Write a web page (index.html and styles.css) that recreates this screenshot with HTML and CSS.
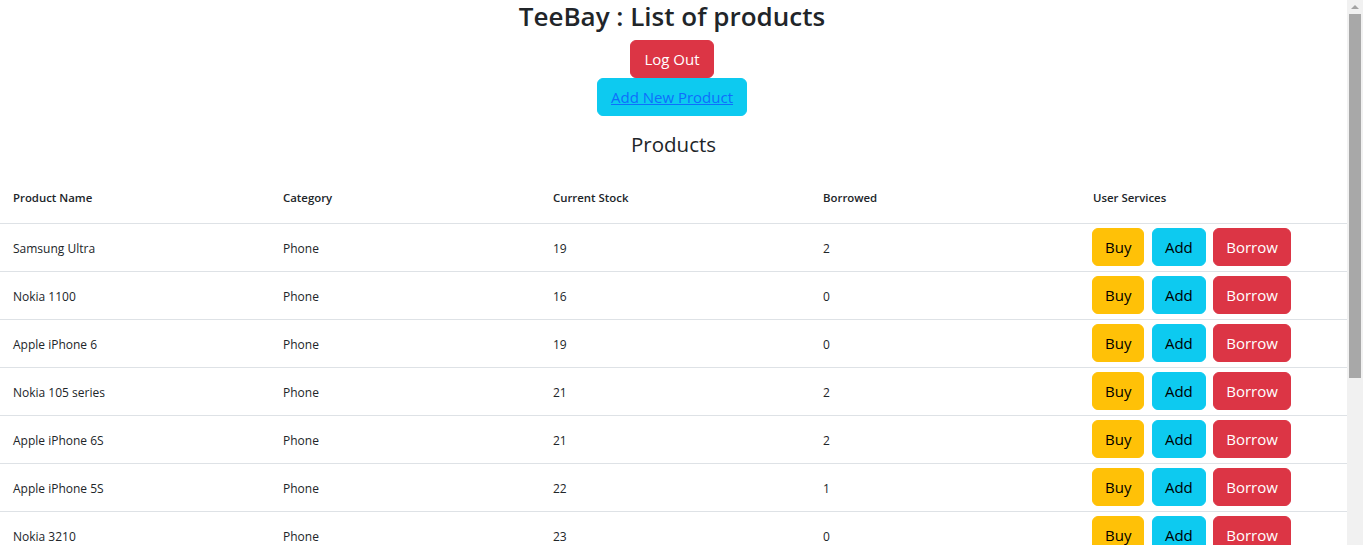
FILE: index.html
```html
<!DOCTYPE html>
<html lang="en">
<head>
<meta charset="utf-8">
<title>TeeBay</title>
<link rel="stylesheet" href="styles.css">
</head>
<body>
<div class="page">
  <div class="top">
    <h2 class="title">TeeBay : List of products</h2>
    <div class="actions">
      <button class="btn btn-danger">Log Out</button>
      <button class="btn btn-info"><a href="#" class="link">Add New Product</a></button>
    </div>
  </div>
  <h4 class="subtitle">Products</h4>
  <div class="table">
    <div class="row head">
      <div class="cell">Product Name</div>
      <div class="cell">Category</div>
      <div class="cell">Current Stock</div>
      <div class="cell">Borrowed</div>
      <div class="cell">User Services</div>
    </div>
    <div class="row">
      <div class="cell">Samsung Ultra</div><div class="cell">Phone</div><div class="cell">19</div><div class="cell">2</div>
      <div class="cell services"><button class="btn btn-warning">Buy</button><button class="btn btn-info">Add</button><button class="btn btn-danger">Borrow</button></div>
    </div>
    <div class="row">
      <div class="cell">Nokia 1100</div><div class="cell">Phone</div><div class="cell">16</div><div class="cell">0</div>
      <div class="cell services"><button class="btn btn-warning">Buy</button><button class="btn btn-info">Add</button><button class="btn btn-danger">Borrow</button></div>
    </div>
    <div class="row">
      <div class="cell">Apple iPhone 6</div><div class="cell">Phone</div><div class="cell">19</div><div class="cell">0</div>
      <div class="cell services"><button class="btn btn-warning">Buy</button><button class="btn btn-info">Add</button><button class="btn btn-danger">Borrow</button></div>
    </div>
    <div class="row">
      <div class="cell">Nokia 105 series</div><div class="cell">Phone</div><div class="cell">21</div><div class="cell">2</div>
      <div class="cell services"><button class="btn btn-warning">Buy</button><button class="btn btn-info">Add</button><button class="btn btn-danger">Borrow</button></div>
    </div>
    <div class="row">
      <div class="cell">Apple iPhone 6S</div><div class="cell">Phone</div><div class="cell">21</div><div class="cell">2</div>
      <div class="cell services"><button class="btn btn-warning">Buy</button><button class="btn btn-info">Add</button><button class="btn btn-danger">Borrow</button></div>
    </div>
    <div class="row">
      <div class="cell">Apple iPhone 5S</div><div class="cell">Phone</div><div class="cell">22</div><div class="cell">1</div>
      <div class="cell services"><button class="btn btn-warning">Buy</button><button class="btn btn-info">Add</button><button class="btn btn-danger">Borrow</button></div>
    </div>
    <div class="row">
      <div class="cell">Nokia 3210</div><div class="cell">Phone</div><div class="cell">23</div><div class="cell">0</div>
      <div class="cell services"><button class="btn btn-warning">Buy</button><button class="btn btn-info">Add</button><button class="btn btn-danger">Borrow</button></div>
    </div>
  </div>
</div>
<div class="scrollbar"><div class="arrow"></div><div class="thumb"></div></div>
</body>
</html>
```
FILE: styles.css
```css
html { overflow: hidden; }
body {
  margin: 0;
  font-family: "Open Sans", "Noto Sans", sans-serif;
  color: #212529;
  background: #fff;
}
.page {
  width: 1347px;
}
.top {
  padding-right: 3px;
}
.title {
  margin: 0;
  height: 40px;
  line-height: 33px;
  font-size: 26px;
  font-weight: 600;
  text-align: center;
}
.actions {
  display: flex;
  flex-direction: column;
  align-items: center;
}
.btn {
  display: inline-block;
  font-family: inherit;
  font-size: 15px;
  line-height: 24px;
  padding: 6px 13px;
  border: 1px solid transparent;
  border-radius: 6px;
  cursor: pointer;
  height: 38px;
}
.btn-danger { background: #dc3545; border-color: #dc3545; color: #fff; }
.btn-info { background: #0dcaf0; border-color: #0dcaf0; color: #000; }
.btn-warning { background: #ffc107; border-color: #ffc107; color: #000; }
.link { color: #0d6efd; text-decoration: underline; }
.subtitle {
  margin: 12px 0 0;
  height: 48px;
  font-size: 20.5px;
  font-weight: 400;
  line-height: 33px;
  text-align: center;
}
.table {
  font-size: 12px;
}
.row {
  display: grid;
  grid-template-columns: repeat(5, 270px);
  height: 47px;
  border-bottom: 1px solid #dee2e6;
  align-items: center;
}
.head .cell { font-weight: 600; font-size: 11.4px; padding-bottom: 4px; }
.row:not(.head) .cell { padding-top: 2px; }
.cell {
  padding-left: 13px;
}
.row:not(.head) .services {
  display: flex;
  align-self: start;
  gap: 7.5px;
  padding-left: 12px;
  padding-top: 4px;
}
.services .btn { padding: 6px 12px; }
.scrollbar {
  position: fixed;
  top: 0;
  right: 0;
  width: 16px;
  height: 545px;
  background: #f1f1f1;
}
.arrow {
  position: absolute;
  top: 5px;
  left: 4px;
  width: 0;
  height: 0;
  border-left: 4px solid transparent;
  border-right: 4px solid transparent;
  border-bottom: 4px solid #a3a3a3;
}
.thumb {
  position: absolute;
  top: 14px;
  left: 2px;
  width: 12px;
  height: 364px;
  background: #a8a8a8;
}
```
